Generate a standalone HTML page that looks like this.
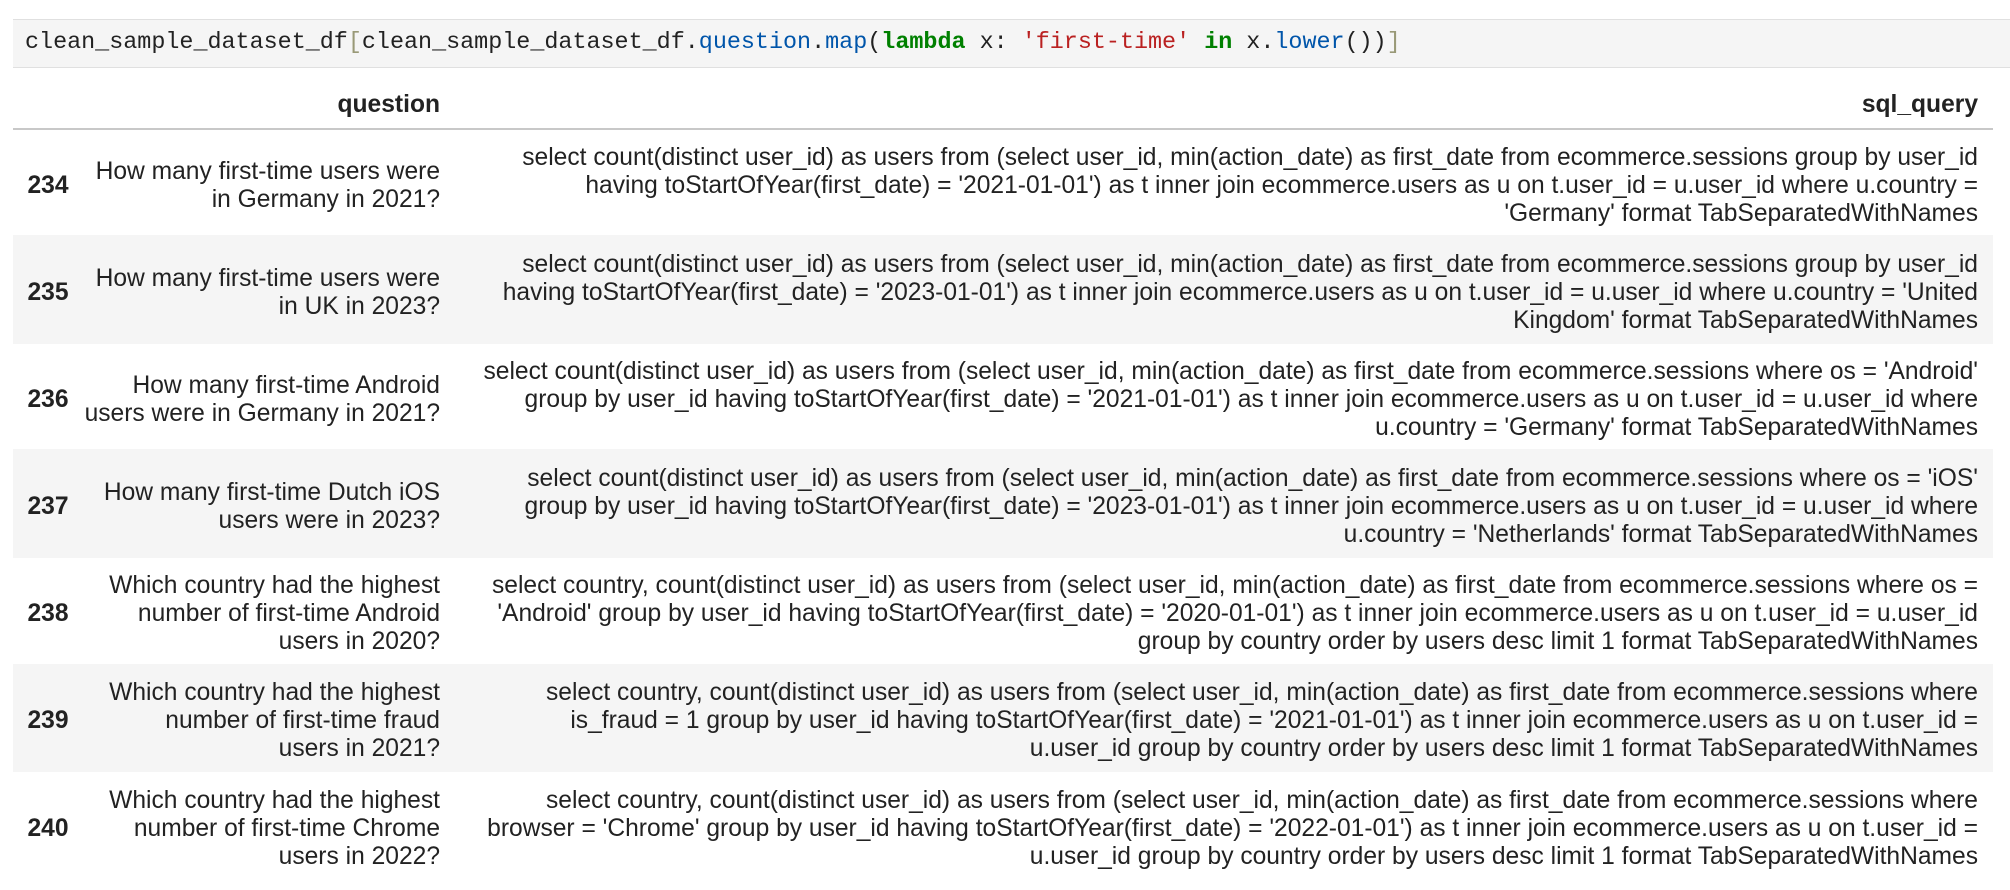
<!DOCTYPE html>
<html><head><meta charset="utf-8"><style>
*{margin:0;padding:0;box-sizing:border-box}
body{width:2010px;height:890px;background:#fff;overflow:hidden;font-family:"Liberation Sans",Arial,sans-serif;color:#222;position:relative}
.code{position:absolute;left:13px;top:19px;width:1997px;height:49px;background:#f5f5f5;border-top:1px solid #e0e0e0;border-bottom:1px solid #e0e0e0;font-family:"Liberation Mono",monospace;font-size:23.4px;line-height:47px;padding-left:12px;color:#222;white-space:nowrap}
.k{color:#008000;font-weight:bold}.s{color:#ba2121}.a{color:#0055aa}.b{color:#999977}
.hdr{position:absolute;top:91px;font-weight:bold;font-size:24.6px}
.hline{position:absolute;left:13px;top:128px;width:1980px;height:2px;background:#c8c8c8}
.row{position:absolute;left:13px;width:1980px;display:flex;align-items:center;font-size:24.6px;line-height:28px;padding-top:6px}
.row.g{background:#f5f5f5}
.idx{width:70px;text-align:center;font-weight:bold}
.q{width:357px;text-align:right;white-space:nowrap}
.sq{flex:1;text-align:right;white-space:nowrap;padding-right:15px}
</style></head><body>
<div class="code">clean_sample_dataset_df<span class="b">[</span>clean_sample_dataset_df.<span class="a">question</span>.<span class="a">map</span>(<span class="k">lambda</span> x: <span class="s">'first-time'</span> <span class="k">in</span> x.<span class="a">lower</span>())<span class="b">]</span></div>
<div class="hdr" style="right:1570px">question</div>
<div class="hdr" style="right:32px">sql_query</div>
<div class="hline"></div>

<div class="row" style="top:130px;height:105px"><div class="idx">234</div><div class="q">How many first-time users were<br>in Germany in 2021?</div><div class="sq">select count(distinct user_id) as users from (select user_id, min(action_date) as first_date from ecommerce.sessions group by user_id<br>having toStartOfYear(first_date) = '2021-01-01') as t inner join ecommerce.users as u on t.user_id = u.user_id where u.country =<br>'Germany' format TabSeparatedWithNames</div></div>

<div class="row g" style="top:235px;height:109px"><div class="idx">235</div><div class="q">How many first-time users were<br>in UK in 2023?</div><div class="sq">select count(distinct user_id) as users from (select user_id, min(action_date) as first_date from ecommerce.sessions group by user_id<br>having toStartOfYear(first_date) = '2023-01-01') as t inner join ecommerce.users as u on t.user_id = u.user_id where u.country = 'United<br>Kingdom' format TabSeparatedWithNames</div></div>

<div class="row" style="top:344px;height:105px"><div class="idx">236</div><div class="q">How many first-time Android<br>users were in Germany in 2021?</div><div class="sq">select count(distinct user_id) as users from (select user_id, min(action_date) as first_date from ecommerce.sessions where os = 'Android'<br>group by user_id having toStartOfYear(first_date) = '2021-01-01') as t inner join ecommerce.users as u on t.user_id = u.user_id where<br>u.country = 'Germany' format TabSeparatedWithNames</div></div>

<div class="row g" style="top:449px;height:109px"><div class="idx">237</div><div class="q">How many first-time Dutch iOS<br>users were in 2023?</div><div class="sq">select count(distinct user_id) as users from (select user_id, min(action_date) as first_date from ecommerce.sessions where os = 'iOS'<br>group by user_id having toStartOfYear(first_date) = '2023-01-01') as t inner join ecommerce.users as u on t.user_id = u.user_id where<br>u.country = 'Netherlands' format TabSeparatedWithNames</div></div>

<div class="row" style="top:558px;height:106px"><div class="idx">238</div><div class="q">Which country had the highest<br>number of first-time Android<br>users in 2020?</div><div class="sq">select country, count(distinct user_id) as users from (select user_id, min(action_date) as first_date from ecommerce.sessions where os =<br>'Android' group by user_id having toStartOfYear(first_date) = '2020-01-01') as t inner join ecommerce.users as u on t.user_id = u.user_id<br>group by country order by users desc limit 1 format TabSeparatedWithNames</div></div>

<div class="row g" style="top:664px;height:108px"><div class="idx">239</div><div class="q">Which country had the highest<br>number of first-time fraud<br>users in 2021?</div><div class="sq">select country, count(distinct user_id) as users from (select user_id, min(action_date) as first_date from ecommerce.sessions where<br>is_fraud = 1 group by user_id having toStartOfYear(first_date) = '2021-01-01') as t inner join ecommerce.users as u on t.user_id =<br>u.user_id group by country order by users desc limit 1 format TabSeparatedWithNames</div></div>

<div class="row" style="top:772px;height:107px"><div class="idx">240</div><div class="q">Which country had the highest<br>number of first-time Chrome<br>users in 2022?</div><div class="sq">select country, count(distinct user_id) as users from (select user_id, min(action_date) as first_date from ecommerce.sessions where<br>browser = 'Chrome' group by user_id having toStartOfYear(first_date) = '2022-01-01') as t inner join ecommerce.users as u on t.user_id =<br>u.user_id group by country order by users desc limit 1 format TabSeparatedWithNames</div></div>
</body></html>
